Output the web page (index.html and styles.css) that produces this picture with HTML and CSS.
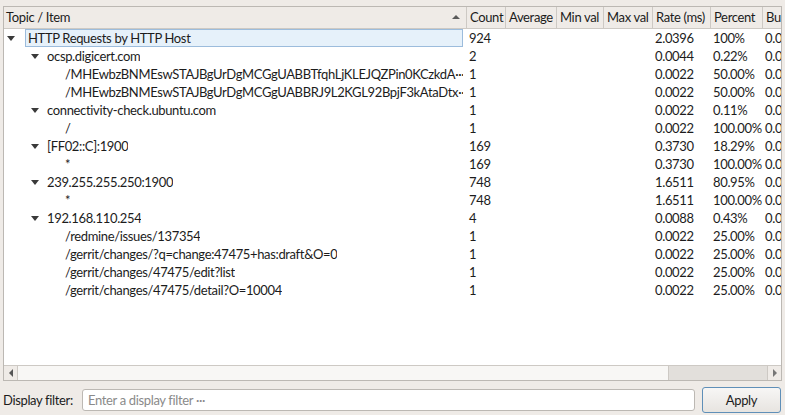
FILE: index.html
```html
<!DOCTYPE html>
<html>
<head>
<meta charset="utf-8">
<link rel="stylesheet" href="styles.css">
</head>
<body>
<div class="app">
  <div class="tree">
    <div class="head">
      <div class="hc c-topic">Topic / Item<span class="sort"></span></div>
      <div class="hc c-count">Count</div>
      <div class="hc c-avg">Average</div>
      <div class="hc c-min">Min val</div>
      <div class="hc c-max">Max val</div>
      <div class="hc c-rate">Rate (ms)</div>
      <div class="hc c-pct">Percent</div>
      <div class="hc c-bu">Burst rate</div>
    </div>
    <div class="rows">
      <div class="row"><div class="c c-topic l0"><span class="arr"></span><span class="sel">HTTP Requests by HTTP Host</span></div><div class="c c-count">924</div><div class="c c-avg"></div><div class="c c-min"></div><div class="c c-max"></div><div class="c c-rate">2.0396</div><div class="c c-pct">100%</div><div class="c c-bu">0.0100</div></div>
      <div class="row"><div class="c c-topic l1"><span class="arr"></span><span class="t">ocsp.digicert.com</span></div><div class="c c-count">2</div><div class="c c-avg"></div><div class="c c-min"></div><div class="c c-max"></div><div class="c c-rate">0.0044</div><div class="c c-pct">0.22%</div><div class="c c-bu">0.0100</div></div>
      <div class="row"><div class="c c-topic l2"><span class="t">/MHEwbzBNMEswSTAJBgUrDgMCGgUABBTfqhLjKLEJQZPin0KCzkdA···</span></div><div class="c c-count">1</div><div class="c c-avg"></div><div class="c c-min"></div><div class="c c-max"></div><div class="c c-rate">0.0022</div><div class="c c-pct">50.00%</div><div class="c c-bu">0.0100</div></div>
      <div class="row"><div class="c c-topic l2"><span class="t">/MHEwbzBNMEswSTAJBgUrDgMCGgUABBRJ9L2KGL92BpjF3kAtaDtx···</span></div><div class="c c-count">1</div><div class="c c-avg"></div><div class="c c-min"></div><div class="c c-max"></div><div class="c c-rate">0.0022</div><div class="c c-pct">50.00%</div><div class="c c-bu">0.0100</div></div>
      <div class="row"><div class="c c-topic l1"><span class="arr"></span><span class="t">connectivity-check.ubuntu.com</span></div><div class="c c-count">1</div><div class="c c-avg"></div><div class="c c-min"></div><div class="c c-max"></div><div class="c c-rate">0.0022</div><div class="c c-pct">0.11%</div><div class="c c-bu">0.0100</div></div>
      <div class="row"><div class="c c-topic l2"><span class="t">/</span></div><div class="c c-count">1</div><div class="c c-avg"></div><div class="c c-min"></div><div class="c c-max"></div><div class="c c-rate">0.0022</div><div class="c c-pct">100.00%</div><div class="c c-bu">0.0100</div></div>
      <div class="row"><div class="c c-topic l1"><span class="arr"></span><span class="t">[FF02::C]:1900</span></div><div class="c c-count">169</div><div class="c c-avg"></div><div class="c c-min"></div><div class="c c-max"></div><div class="c c-rate">0.3730</div><div class="c c-pct">18.29%</div><div class="c c-bu">0.0100</div></div>
      <div class="row"><div class="c c-topic l2"><span class="t">*</span></div><div class="c c-count">169</div><div class="c c-avg"></div><div class="c c-min"></div><div class="c c-max"></div><div class="c c-rate">0.3730</div><div class="c c-pct">100.00%</div><div class="c c-bu">0.0100</div></div>
      <div class="row"><div class="c c-topic l1"><span class="arr"></span><span class="t">239.255.255.250:1900</span></div><div class="c c-count">748</div><div class="c c-avg"></div><div class="c c-min"></div><div class="c c-max"></div><div class="c c-rate">1.6511</div><div class="c c-pct">80.95%</div><div class="c c-bu">0.0100</div></div>
      <div class="row"><div class="c c-topic l2"><span class="t">*</span></div><div class="c c-count">748</div><div class="c c-avg"></div><div class="c c-min"></div><div class="c c-max"></div><div class="c c-rate">1.6511</div><div class="c c-pct">100.00%</div><div class="c c-bu">0.0100</div></div>
      <div class="row"><div class="c c-topic l1"><span class="arr"></span><span class="t">192.168.110.254</span></div><div class="c c-count">4</div><div class="c c-avg"></div><div class="c c-min"></div><div class="c c-max"></div><div class="c c-rate">0.0088</div><div class="c c-pct">0.43%</div><div class="c c-bu">0.0100</div></div>
      <div class="row"><div class="c c-topic l2"><span class="t">/redmine/issues/137354</span></div><div class="c c-count">1</div><div class="c c-avg"></div><div class="c c-min"></div><div class="c c-max"></div><div class="c c-rate">0.0022</div><div class="c c-pct">25.00%</div><div class="c c-bu">0.0100</div></div>
      <div class="row"><div class="c c-topic l2"><span class="t">/gerrit/changes/?q=change:47475+has:draft&amp;O=0</span></div><div class="c c-count">1</div><div class="c c-avg"></div><div class="c c-min"></div><div class="c c-max"></div><div class="c c-rate">0.0022</div><div class="c c-pct">25.00%</div><div class="c c-bu">0.0100</div></div>
      <div class="row"><div class="c c-topic l2"><span class="t">/gerrit/changes/47475/edit?list</span></div><div class="c c-count">1</div><div class="c c-avg"></div><div class="c c-min"></div><div class="c c-max"></div><div class="c c-rate">0.0022</div><div class="c c-pct">25.00%</div><div class="c c-bu">0.0100</div></div>
      <div class="row"><div class="c c-topic l2"><span class="t">/gerrit/changes/47475/detail?O=10004</span></div><div class="c c-count">1</div><div class="c c-avg"></div><div class="c c-min"></div><div class="c c-max"></div><div class="c c-rate">0.0022</div><div class="c c-pct">25.00%</div><div class="c c-bu">0.0100</div></div>
    </div>
    <div class="hscroll">
      <div class="sbtn"><span class="tri-l"></span></div>
      <div class="handle"></div>
      <div class="track"></div>
      <div class="sbtn"><span class="tri-r"></span></div>
    </div>
  </div>
  <div class="filter">
    <span class="flabel">Display filter:</span>
    <div class="finput">Enter a display filter ···</div>
    <div class="apply">Apply</div>
  </div>
</div>
</body>
</html>
```
FILE: styles.css
```css
html, body {
  margin: 0;
  padding: 0;
  background: #efebe7;
  font-family: "Lato", "Open Sans", sans-serif;
  font-size: 13px;
  letter-spacing: -0.35px;
  color: #1c1c1c;
}
.app {
  width: 785px;
  height: 415px;
  box-sizing: border-box;
  padding: 6px 3px 0 3px;
  display: flex;
  flex-direction: column;
}
.tree {
  height: 373px;
  flex: none;
  border: 1px solid #bcb8b3;
  background: #fff;
  display: flex;
  flex-direction: column;
  overflow: hidden;
}
.head {
  display: flex;
  height: 21px;
  background: #efebe7;
  border-bottom: 1px solid #cdc9c4;
  flex: none;
}
.hc {
  box-sizing: border-box;
  border-right: 1px solid #cdc9c4;
  padding-left: 3px;
  line-height: 21px;
  white-space: nowrap;
  overflow: hidden;
  flex: none;
  position: relative;
}
.head .c-topic { padding-left: 2px; }
.c-topic { width: 463px; }
.c-count { width: 39px; }
.c-avg { width: 51px; }
.c-min { width: 47px; }
.c-max { width: 49px; }
.c-rate { width: 58px; }
.c-pct { width: 52px; }
.c-bu { width: 60px; }
.sort {
  position: absolute;
  right: 6px;
  top: 8px;
  width: 0;
  height: 0;
  border-left: 4px solid transparent;
  border-right: 4px solid transparent;
  border-bottom: 4px solid #5a5a5a;
}
.rows {
  flex: 1;
}
.row {
  display: flex;
  height: 18px;
  line-height: 18px;
}
.c {
  box-sizing: border-box;
  padding-left: 2px;
  white-space: nowrap;
  overflow: hidden;
  flex: none;
  display: flex;
  align-items: center;
}
.c.c-topic { padding-right: 4px; }
.t {
  min-width: 0;
  overflow: hidden;
  white-space: nowrap;
}
.l0 { padding-left: 3px; }
.l1 { padding-left: 27px; }
.l2 { padding-left: 61px; }
.arr {
  width: 0;
  height: 0;
  border-left: 4px solid transparent;
  border-right: 4px solid transparent;
  border-top: 5px solid #3a3a3a;
  margin-right: 10px;
  flex: none;
}
.l1 .arr { margin-right: 8px; }
.sel {
  flex: 1;
  align-self: stretch;
  box-sizing: border-box;
  background: #e6f1fa;
  border: 1px solid #9cbcdc;
  padding-left: 2px;
  line-height: 16px;
}
.hscroll {
  flex: none;
  height: 14px;
  display: flex;
  border-top: 1px solid #cdc9c4;
  background: #efebe7;
}
.sbtn {
  width: 13px;
  flex: none;
  display: flex;
  align-items: center;
  justify-content: center;
}
.sbtn:first-child { border-right: 1px solid #cdc9c4; }
.sbtn:last-child { border-left: 1px solid #cdc9c4; }
.tri-l {
  width: 0; height: 0;
  border-top: 4px solid transparent;
  border-bottom: 4px solid transparent;
  border-right: 4px solid #555;
}
.tri-r {
  width: 0; height: 0;
  border-top: 4px solid transparent;
  border-bottom: 4px solid transparent;
  border-left: 4px solid #777;
}
.handle {
  width: 650px;
  flex: none;
  background: #f8f7f5;
  border-right: 1px solid #cdc9c4;
}
.track {
  flex: 1;
  background: #e2dfdb;
}
.filter {
  display: flex;
  align-items: center;
  margin-top: 6px;
  height: 26px;
}
.flabel {
  width: 79px;
  flex: none;
}
.finput {
  width: 613px;
  height: 22px;
  flex: none;
  box-sizing: border-box;
  background: #fff;
  border: 1px solid #bcb8b3;
  border-radius: 3px;
  color: #8a8a8a;
  padding-left: 5px;
  line-height: 20px;
}
.apply {
  margin-left: 7px;
  width: 79px;
  height: 26px;
  box-sizing: border-box;
  border: 1px solid #5f8fb8;
  border-radius: 3px;
  background: linear-gradient(#f7f6f5, #e7e4e0);
  text-align: center;
  line-height: 24px;
}
```
